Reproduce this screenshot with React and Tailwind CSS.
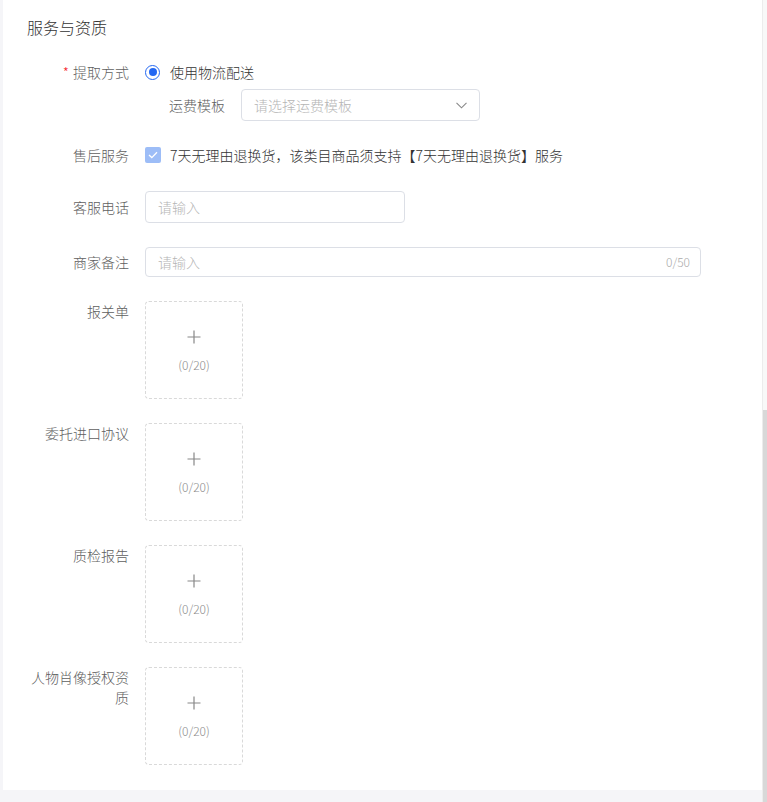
import React from "react";

const font = { fontFamily: '"Noto Sans CJK SC", "Noto Sans", sans-serif' };

const Label = ({ children, required, className = "" }) => (
  <div
    className={`w-[102px] shrink-0 text-right text-[14px] text-[#606060] ${className}`}
  >
    {required && <span className="mr-[4px] text-[#f5222d]">*</span>}
    {children}
  </div>
);

const UploadBox = () => (
  <div className="flex h-[98px] w-[98px] flex-col items-center justify-center rounded-[4px] border border-dashed border-[#d9d9d9] bg-white">
    <svg width="14" height="14" viewBox="0 0 14 14" className="mt-[2px]">
      <path d="M7 0.5v13M0.5 7h13" stroke="#888" strokeWidth="1.2" fill="none" />
    </svg>
    <div className="mt-[13px] text-[12px] leading-[16px] text-[#8c8c8c]">(0/20)</div>
  </div>
);

const uploads = ["报关单", "委托进口协议", "质检报告", "人物肖像授权资质"];

export default function App() {
  return (
    <div className="flex h-[802px] w-full bg-[#f5f5f8] font-light" style={font}>
      <div className="flex-1 pl-[3px]">
        <div className="bg-white pb-[25px] pl-[24px] pt-[15px]">
          <h2 className="text-[16px] leading-[24px] text-[#333]">服务与资质</h2>

          {/* 提取方式 */}
          <div className="mt-[22px] flex gap-[16px]">
            <Label required className="leading-[22px]">
              提取方式
            </Label>
            <div>
              <div className="flex h-[22px] items-center">
                <span className="flex h-[15px] w-[15px] items-center justify-center rounded-full border border-[#2468f2]">
                  <span className="h-[8px] w-[8px] rounded-full bg-[#2468f2]" />
                </span>
                <span className="ml-[10px] text-[14px] text-[#333]">使用物流配送</span>
              </div>
              <div className="mt-[6px] flex items-center gap-[16px] pl-[24px]">
                <span className="text-[14px] text-[#606060]">运费模板</span>
                <div className="flex h-[32px] w-[239px] items-center justify-between rounded-[4px] border border-[#dcdfe6] pl-[12px] pr-[12px]">
                  <span className="text-[14px] text-[#b5b5b5]">请选择运费模板</span>
                  <svg width="11" height="7" viewBox="0 0 11 7">
                    <path d="M0.5 0.8L5.5 5.8L10.5 0.8" stroke="#888" strokeWidth="1.1" fill="none" />
                  </svg>
                </div>
              </div>
            </div>
          </div>

          {/* 售后服务 */}
          <div className="mt-[23px] flex gap-[16px]">
            <Label className="leading-[22px]">售后服务</Label>
            <div className="flex h-[22px] items-center">
              <span className="flex h-[16px] w-[16px] items-center justify-center rounded-[2px] bg-[#9dbdf7]">
                <svg width="10" height="8" viewBox="0 0 10 8">
                  <path d="M1 4L3.8 6.6L9 1.2" stroke="#fff" strokeWidth="1.3" fill="none" />
                </svg>
              </span>
              <span className="ml-[9px] text-[14px] text-[#333]">
                7天无理由退换货，该类目商品须支持【7天无理由退换货】服务
              </span>
            </div>
          </div>

          {/* 客服电话 */}
          <div className="mt-[25px] flex gap-[16px]">
            <Label className="leading-[32px]">客服电话</Label>
            <div className="flex h-[32px] w-[260px] items-center rounded-[4px] border border-[#dcdfe6] px-[12px]">
              <span className="text-[14px] text-[#b5b5b5]">请输入</span>
            </div>
          </div>

          {/* 商家备注 */}
          <div className="mt-[24px] flex gap-[16px]">
            <Label className="leading-[30px]">商家备注</Label>
            <div className="flex h-[30px] w-[556px] items-center justify-between rounded-[4px] border border-[#dcdfe6] pl-[12px] pr-[10px]">
              <span className="text-[14px] text-[#b5b5b5]">请输入</span>
              <span className="text-[12px] text-[#aaa]">0/50</span>
            </div>
          </div>

          {uploads.map((name) => (
            <div key={name} className="mt-[24px] flex gap-[16px]">
              <Label className="leading-[20px]">{name}</Label>
              <UploadBox />
            </div>
          ))}
        </div>
      </div>
      <div className="flex w-[5px] flex-col border-l border-[#ececec] bg-[#f8f8f8]">
        <div className="mt-[410px] flex-1 bg-[#d8d8d8]" />
      </div>
    </div>
  );
}
